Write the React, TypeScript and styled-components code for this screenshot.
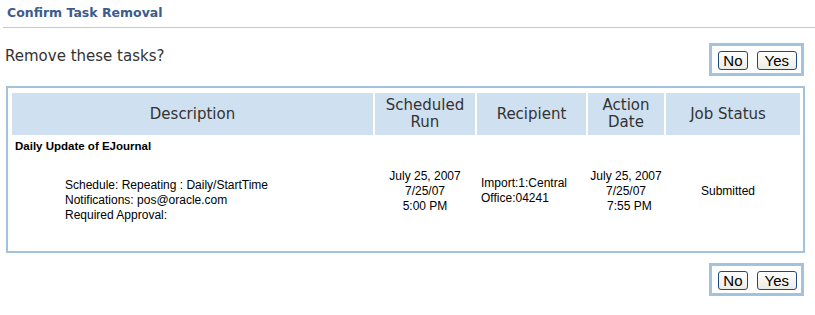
import React from 'react';
import styled, {createGlobalStyle} from "styled-components";

type Task = {
    title: string,
    details: string[],
    scheduled: string[],
    recipient: string,
    action: string[],
    status: string,
}

const tasks: Task[] = [
    {
        title: 'Daily Update of EJournal',
        details: ['Schedule: Repeating : Daily/StartTime', 'Notifications: pos@oracle.com', 'Required Approval:'],
        scheduled: ['July 25, 2007', '7/25/07', '5:00 PM'],
        recipient: 'Import:1:Central Office:04241',
        action: ['July 25, 2007', '7/25/07', '\u00a0\u00a07:55 PM'],
        status: 'Submitted',
    },
];

const Actions = () => (
    <ButtonBox>
        <ButtonElement $pad={4}>No</ButtonElement>
        <ButtonElement $pad={7}>Yes</ButtonElement>
    </ButtonBox>
);

const App = (): JSX.Element => {
    return (
        <Page>
            <GlobalStyle/>
            <Title>Confirm Task Removal</Title>
            <Divider/>
            <PromptRow>
                <Prompt>Remove these tasks?</Prompt>
                <Actions/>
            </PromptRow>
            <Panel>
                <HeaderRow>
                    <HeaderCell>Description</HeaderCell>
                    <HeaderCell>Scheduled<br/>Run</HeaderCell>
                    <HeaderCell>Recipient</HeaderCell>
                    <HeaderCell>Action<br/>Date</HeaderCell>
                    <HeaderCell $padRight={10}>Job Status</HeaderCell>
                </HeaderRow>
                {tasks.map((t) => (
                    <React.Fragment key={t.title}>
                        <TaskTitle>{t.title}</TaskTitle>
                        <DataRow>
                            <Details>
                                {t.details.map((d) => <div key={d}>{d}</div>)}
                            </Details>
                            <CenterCell>
                                {t.scheduled.map((d) => <div key={d}>{d}</div>)}
                            </CenterCell>
                            <Recipient>{t.recipient}</Recipient>
                            <CenterCell>
                                {t.action.map((d) => <div key={d}>{d}</div>)}
                            </CenterCell>
                            <CenterCell $padRight={10}>{t.status}</CenterCell>
                        </DataRow>
                    </React.Fragment>
                ))}
            </Panel>
            <BottomRow>
                <Actions/>
            </BottomRow>
        </Page>
    );
}

// styles
const GlobalStyle = createGlobalStyle`
  body {
    margin: 0;
    background: #fff;
  }
`

const COLS = '361px 100px 109px 76px 134px';

export const Page = styled.div`
  width: 815px;
  font-family: "DejaVu Sans", Verdana, sans-serif;
`

export const Title = styled.div`
  padding: 5px 0 0 7px;
  font-size: 12.5px;
  line-height: 15px;
  font-weight: 700;
  color: #3b5c8c;
`

export const Divider = styled.div`
  margin: 7px 0 0 3px;
  height: 1px;
  background: #c9c9c9;
`

export const PromptRow = styled.div`
  display: flex;
  justify-content: space-between;
  align-items: flex-start;
  margin-top: 15px;
  padding: 0 11px 0 5px;
`

export const Prompt = styled.div`
  margin-top: 4px;
  font-size: 15px;
  line-height: 18px;
  color: #333;
`

export const ButtonBox = styled.div`
  display: flex;
  gap: 9px;
  border: 3px solid #a2c2de;
  padding: 5px 4px 3px 6px;
`

export const ButtonElement = styled.button<{ $pad: number }>`
  box-sizing: border-box;
  height: 19px;
  padding: 0 ${p => p.$pad}px;
  border: 1px solid #1d4a7c;
  border-radius: 3px;
  background: linear-gradient(#ffffff, #ecebe4);
  font-family: "Liberation Sans", Arial, sans-serif;
  font-size: 15px;
  line-height: 17px;
  color: #000;
  cursor: pointer;
`

export const Panel = styled.div`
  margin: 10px 10px 0 6px;
  border: 2px solid #a2c2de;
  padding: 5px 3px 22px 4px;
`

export const HeaderRow = styled.div`
  display: grid;
  grid-template-columns: ${COLS};
  column-gap: 2px;
  height: 42px;
`

export const HeaderCell = styled.div<{ $padRight?: number }>`
  display: flex;
  align-items: center;
  justify-content: center;
  text-align: center;
  background: #cfe0f0;
  padding-right: ${p => p.$padRight || 0}px;
  font-size: 15px;
  line-height: 17px;
  color: #333;
`

export const TaskTitle = styled.div`
  padding: 4px 0 0 3px;
  font-family: "Liberation Sans", Arial, sans-serif;
  font-size: 11.5px;
  line-height: 14px;
  font-weight: 700;
  color: #000;
`

export const DataRow = styled.div`
  display: grid;
  grid-template-columns: ${COLS};
  column-gap: 2px;
  align-items: center;
  font-family: "Liberation Sans", Arial, sans-serif;
  font-size: 12px;
  line-height: 15px;
  color: #000;
`

export const Details = styled.div`
  padding: 25px 0 6px 53px;
`

export const CenterCell = styled.div<{ $padRight?: number }>`
  text-align: center;
  padding-right: ${p => p.$padRight || 0}px;
`

export const Recipient = styled.div`
  padding-left: 4px;
`

export const BottomRow = styled.div`
  display: flex;
  justify-content: flex-end;
  margin-top: 10px;
  padding-right: 11px;
`

export default App;
